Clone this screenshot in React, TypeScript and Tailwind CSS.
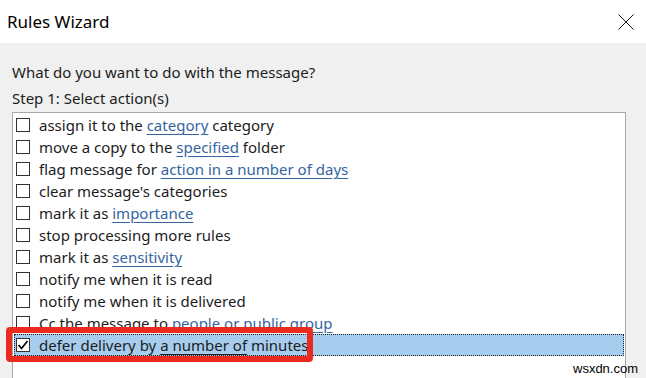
import React from "react";

type Part = { text: string; link?: boolean };

const rows: Part[][] = [
  [{ text: "assign it to the " }, { text: "category", link: true }, { text: " category" }],
  [{ text: "move a copy to the " }, { text: "specified", link: true }, { text: " folder" }],
  [{ text: "flag message for " }, { text: "action in a number of days", link: true }],
  [{ text: "clear message's categories" }],
  [{ text: "mark it as " }, { text: "importance", link: true }],
  [{ text: "stop processing more rules" }],
  [{ text: "mark it as " }, { text: "sensitivity", link: true }],
  [{ text: "notify me when it is read" }],
  [{ text: "notify me when it is delivered" }],
  [{ text: "Cc the message to " }, { text: "people or public group", link: true }],
];

function Checkbox({ checked }: { checked?: boolean }) {
  return (
    <span className="w-[14px] h-[14px] border border-[#333333] bg-white flex items-center justify-center shrink-0">
      {checked && (
        <svg width="12" height="12" viewBox="0 0 12 12">
          <path d="M1.5 6 L4.5 9.5 L10.5 2" fill="none" stroke="#000" strokeWidth="1.7" />
        </svg>
      )}
    </span>
  );
}

function Row({ parts, selected }: { parts: Part[]; selected?: boolean }) {
  return (
    <div
      className={
        selected
          ? "h-[22px] flex items-center gap-[9px] pl-[1px] bg-[#a6cdee] border border-dotted border-[#222222]"
          : "h-[22px] flex items-center gap-[9px] pl-[1px] border border-transparent"
      }
    >
      <Checkbox checked={selected} />
      <span className="whitespace-pre text-[15px] leading-[20px] text-[#1c1c1c]">
        {parts.map((p, i) =>
          p.link ? (
            <span
              key={i}
              className={
                selected
                  ? "underline decoration-[#1c1c1c] underline-offset-[3px]"
                  : "underline decoration-[#3465a0] underline-offset-[3px] text-[#3465a0]"
              }
            >
              {p.text}
            </span>
          ) : (
            <span key={i}>{p.text}</span>
          )
        )}
      </span>
    </div>
  );
}

export default function App() {
  return (
    <div
      className="relative w-[646px] h-[378px] overflow-hidden bg-[#f0f0f0]"
      style={{ fontFamily: '"Noto Sans", "Open Sans", sans-serif' }}
    >
      <div className="h-[43px] bg-white flex items-center justify-between pl-[7px] pr-[12px]">
        <span className="text-[17px] text-black">Rules Wizard</span>
        <svg width="16" height="16" viewBox="0 0 16 16">
          <path d="M0.5 0.5 L15.5 15.5 M15.5 0.5 L0.5 15.5" stroke="#111" strokeWidth="1" />
        </svg>
      </div>

      <div className="pl-[12px] pr-[20px] pt-[18px]">
        <div className="text-[15px] leading-[22px] text-[#1c1c1c]">What do you want to do with the message?</div>
        <div className="text-[15px] leading-[22px] text-[#1c1c1c] mt-[4px]">Step 1: Select action(s)</div>
        <div className="mt-[3px] bg-white border border-[#a9a9a9] h-[300px] pt-[1px] pl-[1px] pr-[1px]">
          {rows.map((r, i) => (
            <Row key={i} parts={r} />
          ))}
          <Row
            selected
            parts={[{ text: "defer delivery by " }, { text: "a number of", link: true }, { text: " minutes" }]}
          />
        </div>
      </div>

      <div className="absolute left-[6px] top-[327px] w-[307px] h-[35px] border-[6px] border-[#ea2a1f] rounded-[4px]" />

      <div
        className="absolute left-[573px] top-[361px] text-[13px] leading-[16px] text-black"
        style={{ fontFamily: '"Liberation Sans", Arial, sans-serif' }}
      >
        wsxdn.com
      </div>
    </div>
  );
}
